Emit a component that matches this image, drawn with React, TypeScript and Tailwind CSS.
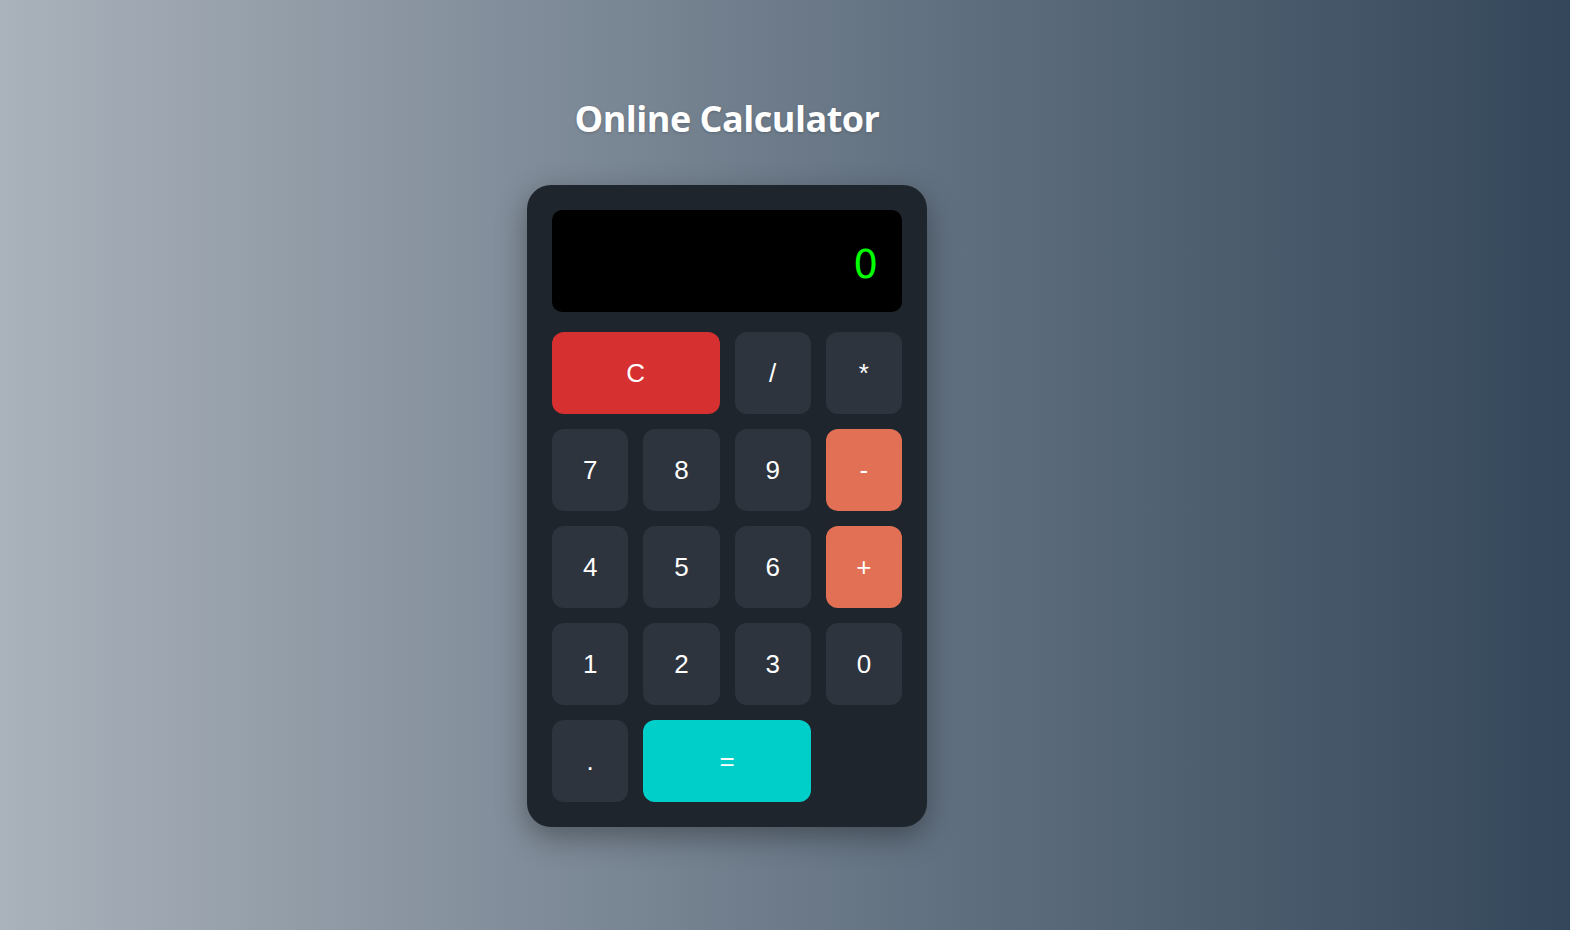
import React, { useState } from 'react';

type Key = { label: string; kind: 'num' | 'op' | 'clear' | 'equals'; span?: boolean };

const keys: Key[] = [
  { label: 'C', kind: 'clear', span: true },
  { label: '/', kind: 'num' },
  { label: '*', kind: 'num' },
  { label: '7', kind: 'num' },
  { label: '8', kind: 'num' },
  { label: '9', kind: 'num' },
  { label: '-', kind: 'op' },
  { label: '4', kind: 'num' },
  { label: '5', kind: 'num' },
  { label: '6', kind: 'num' },
  { label: '+', kind: 'op' },
  { label: '1', kind: 'num' },
  { label: '2', kind: 'num' },
  { label: '3', kind: 'num' },
  { label: '0', kind: 'num' },
  { label: '.', kind: 'num' },
  { label: '=', kind: 'equals', span: true },
];

const styleFor = (k: Key) => {
  if (k.kind === 'clear') return 'bg-[#d63031] col-span-2';
  if (k.kind === 'equals') return 'bg-[#00cec9] col-span-2';
  if (k.kind === 'op') return 'bg-[#e17055]';
  return 'bg-[#2e343e]';
};

const App: React.FC = () => {
  const [display, setDisplay] = useState('0');

  const press = (label: string) => {
    if (label === 'C') return setDisplay('0');
    if (label === '=') {
      try {
        // eslint-disable-next-line no-new-func
        setDisplay(String(Function(`return (${display})`)()));
      } catch {
        setDisplay('Error');
      }
      return;
    }
    setDisplay((d) => (d === '0' || d === 'Error' ? label : d + label));
  };

  return (
    <div className="min-h-[930px] w-full bg-gradient-to-r from-[#aab2bb] to-[#34475a] flex flex-col items-center pt-[94px] pr-[116px]">
      <h1 className="text-white font-bold text-[36px] leading-[50px] font-['Open_Sans',sans-serif] tracking-[-0.5px] [text-shadow:0_1px_3px_rgba(0,0,0,0.2)]">
        Online Calculator
      </h1>
      <div className="mt-[41px] w-[400px] rounded-[24px] bg-[#1f252d] p-[25px] shadow-[0_10px_30px_rgba(0,0,0,0.35)]">
        <div className="h-[102px] rounded-[10px] bg-black flex items-center justify-end pl-[25px] pr-[24px] pt-[6px]">
          <span className="text-[#00ff00] text-[39px] font-['DejaVu_Sans',sans-serif] leading-none">{display}</span>
        </div>
        <div className="mt-[20px] grid grid-cols-4 gap-x-[15px] gap-y-[15px]">
          {keys.map((k) => (
            <button
              key={k.label}
              onClick={() => press(k.label)}
              className={`h-[82px] rounded-[12px] text-white text-[26px] font-['Liberation_Sans',Arial,sans-serif] flex items-center justify-center ${styleFor(k)}`}
            >
              {k.label}
            </button>
          ))}
        </div>
      </div>
    </div>
  );
};

export default App;
